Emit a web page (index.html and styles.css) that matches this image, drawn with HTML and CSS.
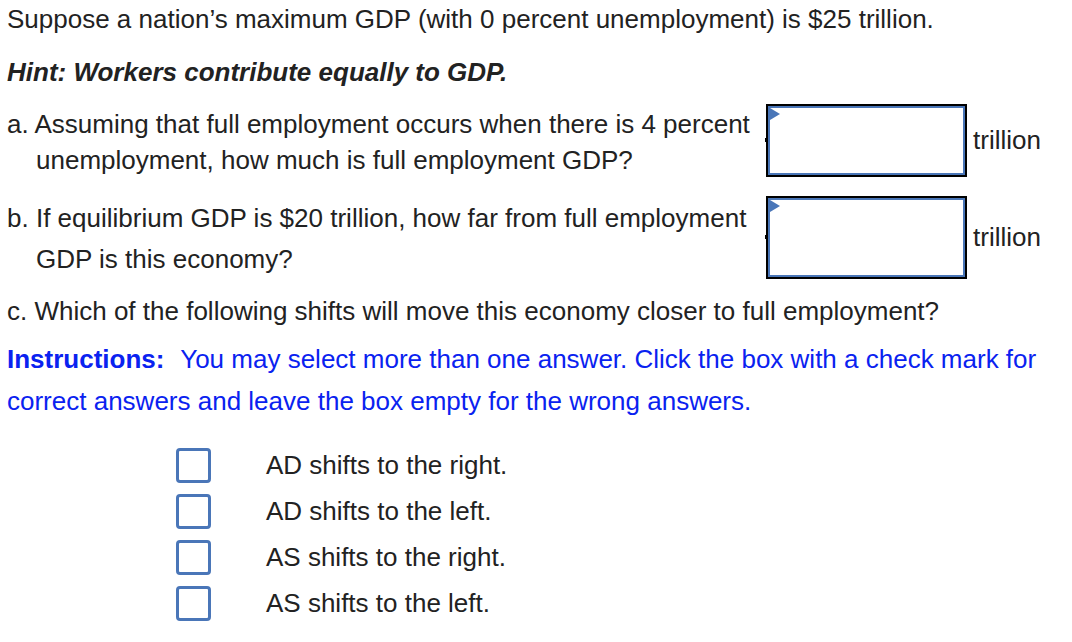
FILE: index.html
```
<!DOCTYPE html>
<html lang="en">
<head>
    <meta charset="UTF-8">
    <title>GDP Question</title>
    <link rel="stylesheet" href="styles.css">
</head>
<body>
    <div class="question">
        <p class="intro">Suppose a nation’s maximum GDP (with 0 percent unemployment) is $25 trillion.</p>
        <p class="hint">Hint: Workers contribute equally to GDP.</p>

        <div class="part part-a">
            <p class="part-text">a. Assuming that full employment occurs when there is 4 percent unemployment, how much is full employment GDP?</p>
            <div class="answer">
                <div class="answer-box"><span class="flag"></span></div>
                <span class="unit">trillion</span>
            </div>
        </div>

        <div class="part part-b">
            <p class="part-text">b. If equilibrium GDP is $20 trillion, how far from full employment GDP is this economy?</p>
            <div class="answer">
                <div class="answer-box tall"><span class="flag"></span></div>
                <span class="unit">trillion</span>
            </div>
        </div>

        <p class="part-c">c. Which of the following shifts will move this economy closer to full employment?</p>
        <p class="instructions"><b>Instructions:</b> You may select more than one answer. Click the box with a check mark for correct answers and leave the box empty for the wrong answers.</p>

        <ul class="choices">
            <li><span class="checkbox"></span>AD shifts to the right.</li>
            <li><span class="checkbox"></span>AD shifts to the left.</li>
            <li><span class="checkbox"></span>AS shifts to the right.</li>
            <li><span class="checkbox"></span>AS shifts to the left.</li>
        </ul>
    </div>
</body>
</html>
```

FILE: styles.css
```
body {
    margin: 0;
    background: #ffffff;
    font-family: "Liberation Sans", Arial, sans-serif;
    font-size: 26px;
    color: #222222;
}
p {
    margin: 0;
}
.question {
    padding: 4px 0 0 7px;
}
.intro {
    line-height: 30px;
}
.hint {
    margin-top: 23px;
    font-weight: bold;
    font-style: italic;
    line-height: 30px;
}
.part {
    display: flex;
    align-items: flex-start;
}
.part-a {
    margin-top: 19px;
}
.part-b {
    margin-top: 20px;
}
.part-text {
    width: 730px;
    padding-left: 29px;
    text-indent: -29px;
    line-height: 36px;
}
.part-b .part-text {
    line-height: 41px;
}
.answer {
    display: flex;
    align-items: center;
    margin-top: -2px;
}
.answer-box {
    position: relative;
    width: 197px;
    height: 69px;
    border: 2px solid #000000;
    box-shadow: inset 0 0 0 2px #4a76b8;
}
.answer-box::before {
    content: "";
    position: absolute;
    left: -3px;
    top: 32px;
    width: 2px;
    height: 4px;
    background: #000000;
}
.answer-box.tall {
    height: 79px;
}
.answer-box.tall::before {
    top: 37px;
}
.flag {
    position: absolute;
    left: 2px;
    top: 2px;
    width: 0;
    height: 0;
    border-top: 6px solid transparent;
    border-bottom: 6px solid transparent;
    border-left: 10px solid #4a76b8;
}
.unit {
    margin-left: 6px;
}
.part-c {
    margin-top: 16px;
    line-height: 30px;
}
.instructions {
    margin-top: 12px;
    color: #0a22f0;
    line-height: 42px;
}
.instructions b {
    margin-right: 9px;
}
.choices {
    list-style: none;
    margin: 20px 0 0 0;
    padding: 0 0 0 169px;
}
.choices li {
    display: flex;
    align-items: center;
    height: 46px;
}
.checkbox {
    width: 29px;
    height: 29px;
    border: 3px solid #4a76b8;
    border-radius: 4px;
    margin-right: 55px;
}
```
